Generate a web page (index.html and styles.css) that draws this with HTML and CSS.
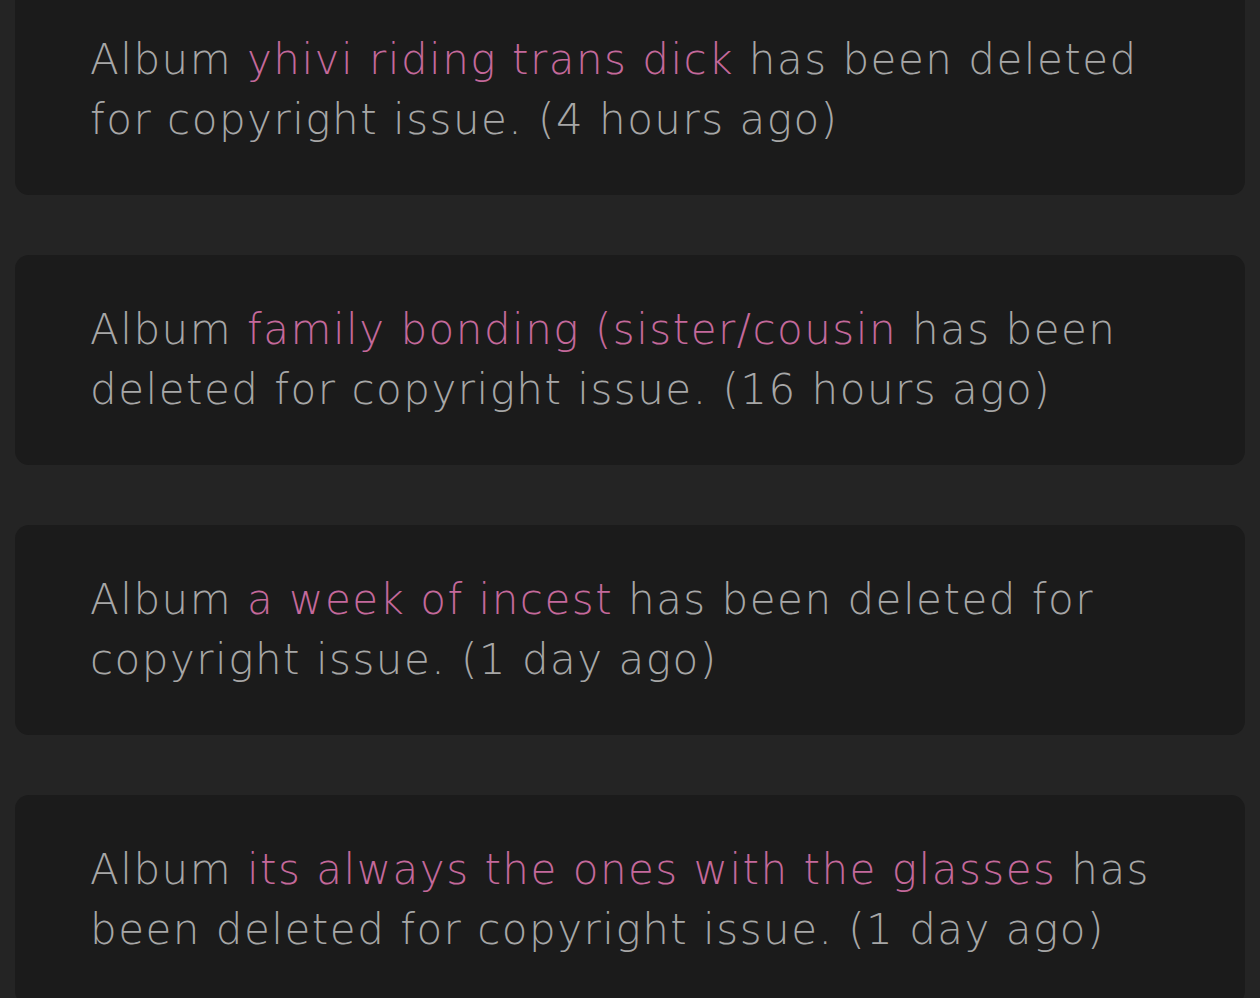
FILE: index.html
```html
<!DOCTYPE html>
<html lang="en">
<head>
    <meta charset="UTF-8">
    <meta name="viewport" content="width=device-width, initial-scale=1.0">
    <title>Notifications</title>
    <link rel="stylesheet" href="styles.css">
</head>
<body>
    <div class="notice-list">
        <div class="notice">
            <p>Album <span class="album">yhivi riding trans dick</span> has been deleted for copyright issue. (4 hours ago)</p>
        </div>
        <div class="notice">
            <p>Album <span class="album">family bonding (sister/cousin</span> has been deleted for copyright issue. (16 hours ago)</p>
        </div>
        <div class="notice">
            <p>Album <span class="album">a week of incest</span> has been deleted for copyright issue. (1 day ago)</p>
        </div>
        <div class="notice">
            <p>Album <span class="album">its always the ones with the glasses</span> has been deleted for copyright issue. (1 day ago)</p>
        </div>
    </div>
</body>
</html>
```

FILE: styles.css
```css
body {
    margin: 0;
    background-color: #242424;
    color: #a7a7a7;
    font-family: "DejaVu Sans", sans-serif;
    overflow: hidden;
}
.notice-list {
    display: flex;
    flex-direction: column;
    gap: 60px;
    margin-top: -15px;
    padding: 0 15px;
}
.notice {
    background-color: #1b1b1b;
    border-radius: 14px;
    padding: 45px 75px;
}
.notice p {
    margin: 0;
    font-size: 42px;
    font-weight: 300;
    line-height: 60px;
    letter-spacing: 1.5px;
}
.album {
    color: #c4699b;
}
```
